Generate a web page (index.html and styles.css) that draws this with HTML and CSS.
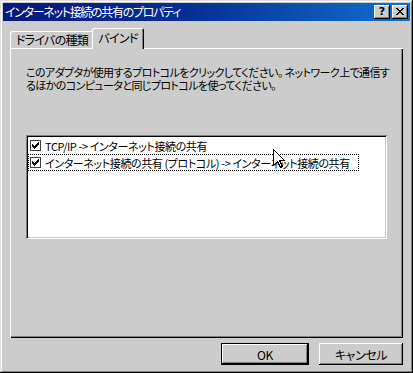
FILE: index.html
```html
<!DOCTYPE html>
<html lang="ja">
<head>
    <meta charset="UTF-8">
    <title>インターネット接続の共有のプロパティ</title>
    <link rel="stylesheet" href="styles.css">
</head>
<body>
    <div class="window">
        <div class="titlebar">
            <span class="title">インターネット接続の共有のプロパティ</span>
            <div class="title-buttons">
                <button class="tbtn help">?</button>
                <button class="tbtn close">
                    <svg width="8" height="7" viewBox="0 0 8 7" shape-rendering="crispEdges">
                        <path d="M0 0h2v1h-2zM6 0h2v1h-2zM1 1h2v1h-2zM5 1h2v1h-2zM2 2h4v1h-4zM3 3h2v1h-2zM2 4h4v1h-4zM1 5h2v1h-2zM5 5h2v1h-2zM0 6h2v1h-2zM6 6h2v1h-2z" fill="#000"/>
                    </svg>
                </button>
            </div>
        </div>
        <div class="content">
            <div class="tabs">
                <div class="tab">ドライバの種類</div>
                <div class="tab active">バインド</div>
            </div>
            <div class="panel">
                <div class="desc">
                    <span class="line">このアダプタが使用するプロトコルをクリックしてください。 ネットワーク上で通信す</span>
                    <span class="line">るほかのコンピュータと同じプロトコルを使ってください。</span>
                </div>
                <div class="listbox">
                    <div class="item">
                        <span class="check"><svg width="7" height="7" viewBox="0 0 7 7" shape-rendering="crispEdges"><path d="M6 0h1v3h-1zM5 1h1v3h-1zM4 2h1v3h-1zM3 3h1v3h-1zM2 4h1v3h-1zM1 3h1v3h-1zM0 2h1v3h-1z" fill="#000"/></svg></span>
                        <span>TCP/IP -&gt; インターネット接続の共有</span>
                    </div>
                    <div class="item focus">
                        <span class="check"><svg width="7" height="7" viewBox="0 0 7 7" shape-rendering="crispEdges"><path d="M6 0h1v3h-1zM5 1h1v3h-1zM4 2h1v3h-1zM3 3h1v3h-1zM2 4h1v3h-1zM1 3h1v3h-1zM0 2h1v3h-1z" fill="#000"/></svg></span>
                        <span>インターネット接続の共有 (プロトコル) -&gt; インターネット接続の共有</span>
                    </div>
                    <svg class="cursor" width="12" height="20" viewBox="0 0 12 20" shape-rendering="crispEdges">
                        <path d="M0.5 0.5 L0.5 16.5 L4.5 12.5 L7.5 18.5 L9.5 17.5 L6.5 11.5 L11.5 11.5 Z" fill="#fff" stroke="#000" stroke-width="1"/>
                    </svg>
                </div>
            </div>
            <div class="actions">
                <button class="btn default">OK</button>
                <button class="btn">キャンセル</button>
            </div>
        </div>
    </div>
</body>
</html>
```

FILE: styles.css
```css
body {
    margin: 0;
    padding: 0;
    background-color: #cccccc;
    font-family: "Noto Sans CJK JP", "MS UI Gothic", sans-serif;
    font-size: 11px;
    letter-spacing: -0.4px;
    font-feature-settings: "palt";
    color: #000;
    overflow: hidden;
}
.window {
    width: 413px;
    height: 373px;
    box-sizing: border-box;
    padding: 3px;
    background-color: #cccccc;
    box-shadow: inset -1px -1px #000, inset 1px 1px #dfdfdf, inset -2px -2px #808080, inset 2px 2px #fff;
}
.titlebar {
    height: 18px;
    display: flex;
    align-items: center;
    justify-content: space-between;
    padding: 0 2px;
    background: linear-gradient(to right, #08187a 0%, #062e92 45%, #1070d0 100%);
}
.title {
    color: #fff;
    font-size: 12px;
    letter-spacing: -1.3px;
    line-height: 18px;
    white-space: nowrap;
}
.title-buttons {
    display: flex;
    gap: 2px;
}
.tbtn {
    width: 16px;
    height: 14px;
    padding: 0;
    border: none;
    background-color: #cccccc;
    box-shadow: inset -1px -1px #000, inset 1px 1px #fff, inset -2px -2px #808080;
    display: flex;
    align-items: center;
    justify-content: center;
    font-family: "DejaVu Sans", sans-serif;
    font-weight: bold;
    font-size: 11px;
    letter-spacing: 0;
    line-height: 14px;
}
.tbtn svg {
    margin-top: -1px;
}
.content {
    padding: 0 7px;
}
.tabs {
    display: flex;
    align-items: flex-end;
    height: 20px;
    margin-top: 7px;
}
.tab {
    height: 17px;
    box-sizing: border-box;
    line-height: 17px;
    font-size: 12px;
    letter-spacing: -0.7px;
    background-color: #cccccc;
    border-radius: 2px 2px 0 0;
    box-shadow: inset 1px 1px #fff, inset -1px 0 #000, inset -2px 0 #808080;
    white-space: nowrap;
}
.tab:first-child {
    width: 84px;
    margin-right: -2px;
    text-align: center;
}
.tab.active {
    position: relative;
    z-index: 1;
    width: 52px;
    height: 21px;
    margin-bottom: -1px;
    line-height: 19px;
    text-align: center;
}
.panel {
    height: 290px;
    box-sizing: border-box;
    padding: 18px 16px 0 16px;
    box-shadow: inset 1px 1px #fff, inset -1px -1px #000, inset -2px -2px #808080;
}
.desc {
    display: flex;
    flex-direction: column;
    letter-spacing: -0.6px;
    white-space: nowrap;
}
.line {
    height: 13px;
    line-height: 13px;
}
.listbox {
    position: relative;
    width: 361px;
    height: 104px;
    box-sizing: border-box;
    margin-top: 43px;
    padding: 2px;
    background-color: #fff;
    box-shadow: inset 1px 1px #808080, inset -1px -1px #fff, inset 2px 2px #000, inset -2px -2px #cccccc;
}
.item {
    display: flex;
    align-items: center;
    width: fit-content;
    height: 17px;
    box-sizing: border-box;
    padding: 0 9px 0 2px;
    white-space: nowrap;
}
.item.focus {
    outline: 1px dotted #000;
    outline-offset: -1px;
}
.check {
    width: 11px;
    height: 11px;
    box-sizing: border-box;
    border: 1px solid #404040;
    margin-right: 4px;
    display: flex;
    align-items: center;
    justify-content: center;
    background-color: #fff;
}
.cursor {
    position: absolute;
    left: 247px;
    top: 14px;
}
.actions {
    display: flex;
    justify-content: flex-end;
    gap: 10px;
    margin-top: 5px;
}
.btn {
    height: 22px;
    padding: 0;
    border: none;
    background-color: #cccccc;
    font-family: "Noto Sans CJK JP", "MS UI Gothic", sans-serif;
    font-size: 12px;
    letter-spacing: -0.4px;
    font-feature-settings: "palt";
    color: #000;
    box-shadow: inset -1px -1px #000, inset 1px 1px #fff, inset -2px -2px #808080;
    width: 84px;
}
.btn.default {
    width: 88px;
    border: 1px solid #000;
    box-shadow: inset -1px -1px #000, inset 1px 1px #fff, inset -2px -2px #808080;
}
```
